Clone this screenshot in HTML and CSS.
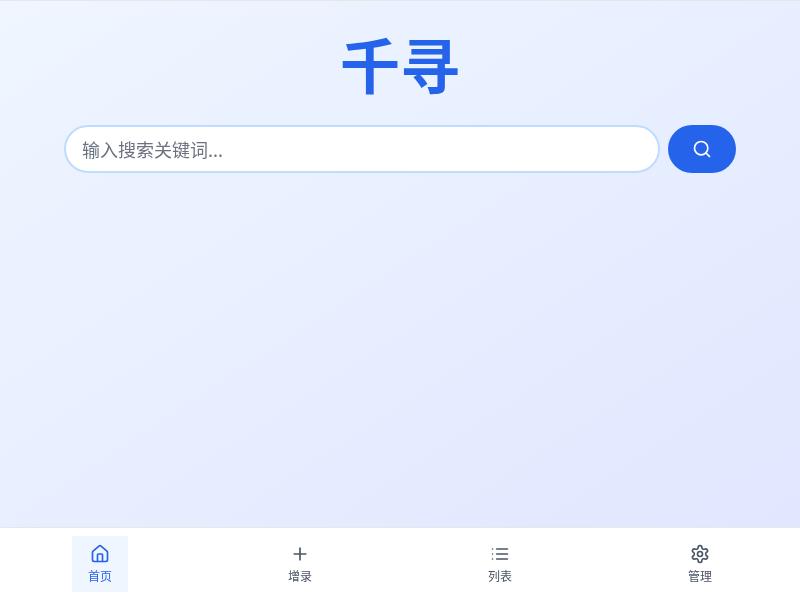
FILE: index.html
```html
<!DOCTYPE html>
<html lang="zh-CN">
<head>
<meta charset="utf-8">
<title>千寻</title>
<link rel="stylesheet" href="styles.css">
</head>
<body>
<div class="app">
  <main class="main">
    <h1 class="title">千寻</h1>
    <form class="search">
      <input class="search-input" type="text" placeholder="输入搜索关键词...">
      <button class="search-btn" type="button" aria-label="搜索">
        <svg class="icon" viewBox="0 0 24 24"><circle cx="11" cy="11" r="8"/><path d="m21 21-4.3-4.3"/></svg>
      </button>
    </form>
  </main>
  <nav class="nav">
    <div class="nav-cell"><a class="nav-item active">
      <svg class="icon" viewBox="0 0 24 24"><path d="M15 21v-8a1 1 0 0 0-1-1h-4a1 1 0 0 0-1 1v8"/><path d="M3 10a2 2 0 0 1 .709-1.528l7-5.999a2 2 0 0 1 2.582 0l7 5.999A2 2 0 0 1 21 10v9a2 2 0 0 1-2 2H5a2 2 0 0 1-2-2z"/></svg>
      <span>首页</span></a></div>
    <div class="nav-cell"><a class="nav-item">
      <svg class="icon" viewBox="0 0 24 24"><path d="M5 12h14"/><path d="M12 5v14"/></svg>
      <span>增录</span></a></div>
    <div class="nav-cell"><a class="nav-item">
      <svg class="icon" viewBox="0 0 24 24"><path d="M3 12h.01"/><path d="M3 18h.01"/><path d="M3 6h.01"/><path d="M8 12h13"/><path d="M8 18h13"/><path d="M8 6h13"/></svg>
      <span>列表</span></a></div>
    <div class="nav-cell"><a class="nav-item">
      <svg class="icon" viewBox="0 0 24 24"><path d="M12.22 2h-.44a2 2 0 0 0-2 2v.18a2 2 0 0 1-1 1.73l-.43.25a2 2 0 0 1-2 0l-.15-.08a2 2 0 0 0-2.73.73l-.22.38a2 2 0 0 0 .73 2.73l.15.1a2 2 0 0 1 1 1.72v.51a2 2 0 0 1-1 1.74l-.15.09a2 2 0 0 0-.73 2.73l.22.38a2 2 0 0 0 2.73.73l.15-.08a2 2 0 0 1 2 0l.43.25a2 2 0 0 1 1 1.73V20a2 2 0 0 0 2 2h.44a2 2 0 0 0 2-2v-.18a2 2 0 0 1 1-1.73l.43-.25a2 2 0 0 1 2 0l.15.08a2 2 0 0 0 2.73-.73l.22-.39a2 2 0 0 0-.73-2.73l-.15-.08a2 2 0 0 1-1-1.74v-.5a2 2 0 0 1 1-1.74l.15-.09a2 2 0 0 0 .73-2.73l-.22-.38a2 2 0 0 0-2.73-.73l-.15.08a2 2 0 0 1-2 0l-.43-.25a2 2 0 0 1-1-1.73V4a2 2 0 0 0-2-2z"/><circle cx="12" cy="12" r="3"/></svg>
      <span>管理</span></a></div>
  </nav>
</div>
</body>
</html>
```
FILE: styles.css
```css
* { box-sizing: border-box; }
html, body { margin: 0; height: 100%; }
body {
  font-family: "Noto Sans CJK SC", sans-serif;
  background: #fff;
}
.app {
  height: 600px;
  display: flex;
  flex-direction: column;
  overflow: hidden;
  border-top: 1px solid #e5e7eb;
  will-change: transform;
}
.main {
  flex: 1;
  display: flex;
  flex-direction: column;
  align-items: center;
  padding-top: 32px;
  background: linear-gradient(to bottom right, #eff6ff, #e0e7ff);
}
.title {
  margin: 0 0 32px;
  font-size: 60px;
  line-height: 60px;
  font-weight: 700;
  color: #2563eb;
}
.search {
  width: 672px;
  display: flex;
  gap: 8px;
}
.search-input {
  flex: 1;
  min-width: 0;
  height: 48px;
  padding: 0 16px;
  border: 2px solid #bfdbfe;
  border-radius: 9999px;
  background: #fff;
  font: inherit;
  font-size: 18px;
  outline: none;
}
.search-input::placeholder { color: #6b7280; opacity: 1; }
.search-btn {
  width: 68px;
  height: 48px;
  display: flex;
  align-items: center;
  justify-content: center;
  border: 0;
  border-radius: 9999px;
  background: #2563eb;
  color: #fff;
  padding: 0;
}
.icon {
  width: 20px;
  height: 20px;
  fill: none;
  stroke: currentColor;
  stroke-width: 2;
  stroke-linecap: round;
  stroke-linejoin: round;
  display: block;
}
.nav {
  height: 73px;
  flex: none;
  display: grid;
  grid-template-columns: repeat(4, 1fr);
  background: #fff;
  border-top: 1px solid #e5e7eb;
  padding-top: 8px;
}
.nav-cell {
  display: flex;
  justify-content: center;
}
.nav-item {
  width: 56px;
  height: 56px;
  display: flex;
  flex-direction: column;
  align-items: center;
  justify-content: center;
  gap: 4px;
  font-size: 12px;
  line-height: 16px;
  color: #4b5563;
}
.nav-item .icon { color: #4b5563; }
.nav-item.active { background: #eff6ff; color: #2563eb; }
.nav-item.active .icon { color: #2563eb; }
```
